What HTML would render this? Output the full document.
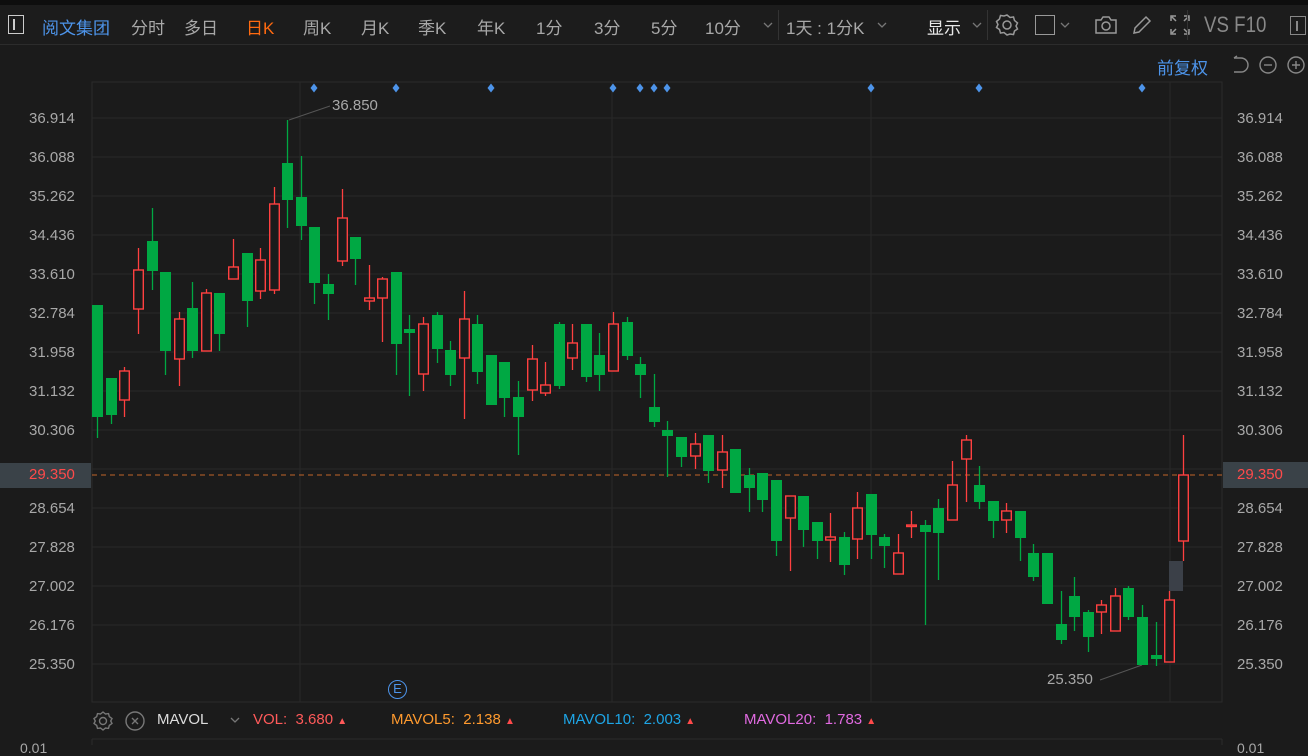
<!DOCTYPE html>
<html><head><meta charset="utf-8"><style>
*{margin:0;padding:0;box-sizing:border-box}
body{width:1308px;height:745px;background:#1b1b1b;overflow:hidden;position:relative;font-family:"Liberation Sans","Noto Sans CJK SC",sans-serif;color:#a8a8a8}
.t{position:absolute;white-space:nowrap}
#top{position:absolute;left:0;top:0;width:1308px;height:5px;background:#0e0e0e}
#bar{position:absolute;left:0;top:5px;width:1308px;height:40px;background:#1c1c1c;border-bottom:1px solid #2c2c2c}
.tb{font-size:17px;top:14px}
.sep{position:absolute;top:10px;width:1px;height:30px;background:#333}
.cv{position:absolute;top:22px}
</style></head><body>
<div id="top"></div><div id="bar"></div>
<div class="t" style="left:8px;top:15px;width:16px;height:19px;border:1.5px solid #ccc"></div>
<div class="t" style="left:13px;top:19px;width:1.5px;height:11px;background:#ccc"></div>
<div class="t tb" style="left:42px;color:#4d94ea">阅文集团</div>
<div class="t tb" style="left:131px">分时</div>
<div class="t tb" style="left:184px">多日</div>
<div class="t tb" style="left:246px;color:#ff6a10">日K</div>
<div class="t tb" style="left:303px">周K</div>
<div class="t tb" style="left:361px">月K</div>
<div class="t tb" style="left:418px">季K</div>
<div class="t tb" style="left:477px">年K</div>
<div class="t tb" style="left:536px">1分</div>
<div class="t tb" style="left:594px">3分</div>
<div class="t tb" style="left:651px">5分</div>
<div class="t tb" style="left:705px">10分</div>
<svg class="cv" style="left:763px" width="10" height="7"><path d="M1 1l4 4 4-4" fill="none" stroke="#777" stroke-width="1.3"/></svg>
<div class="sep" style="left:778px"></div>
<div class="t tb" style="left:786px">1天 : 1分K</div>
<svg class="cv" style="left:877px" width="10" height="7"><path d="M1 1l4 4 4-4" fill="none" stroke="#777" stroke-width="1.3"/></svg>
<div class="t tb" style="left:927px;color:#e8e8e8">显示</div>
<svg class="cv" style="left:972px" width="10" height="7"><path d="M1 1l4 4 4-4" fill="none" stroke="#777" stroke-width="1.3"/></svg>
<div class="sep" style="left:987px"></div>
<svg class="t" style="left:995px;top:13px" width="24" height="24" viewBox="0 0 24 24" fill="none" stroke="#999" stroke-width="1.5"><path d="M12 2l3 2.5 3.5-.5 1 3.5 3 2.5-1.5 3 1.5 3-3 2-1 3.5-3.5-.5L12 22l-3-2.5-3.5.5-1-3.5-3-2 1.5-3-1.5-3 3-2.5 1-3.5 3.5.5z"/><circle cx="12" cy="12" r="4"/></svg>
<div class="t" style="left:1035px;top:15px;width:20px;height:20px;border:1.5px solid #999"></div>
<svg class="cv" style="left:1060px" width="10" height="7"><path d="M1 1l4 4 4-4" fill="none" stroke="#777" stroke-width="1.3"/></svg>
<svg class="t" style="left:1094px;top:14px" width="24" height="22" viewBox="0 0 24 22" fill="none" stroke="#999" stroke-width="1.5"><path d="M2 6h5l2-3h6l2 3h5v13H2z"/><circle cx="12" cy="12" r="4"/></svg>
<svg class="t" style="left:1131px;top:14px" width="22" height="22" viewBox="0 0 22 22" fill="none" stroke="#999" stroke-width="1.5"><path d="M3 19l1-5L15 3l4 4L8 18z"/></svg>
<svg class="t" style="left:1169px;top:14px" width="22" height="22" viewBox="0 0 22 22" fill="none" stroke="#999" stroke-width="1.5"><path d="M2 7V2h5M15 2h5v5M20 15v5h-5M7 20H2v-5M3 3l4 4M19 3l-4 4M19 19l-4-4M3 19l4-4"/></svg>
<div class="sep" style="left:1187px"></div>
<div class="t" style="left:1204px;top:12px;font-size:22px;color:#888;transform:scaleX(0.85);transform-origin:left">VS F10</div>
<div class="t" style="left:1290px;top:16px;width:16px;height:19px;border:1.5px solid #888"></div>
<div class="t" style="left:1296px;top:21px;width:1.5px;height:10px;background:#888"></div>
<div class="t" style="left:1157px;top:54px;font-size:17px;color:#4d94ea">前复权</div>
<svg class="t" style="left:1230px;top:54px" width="78" height="22" viewBox="0 0 78 22" fill="none" stroke="#888" stroke-width="1.4"><path d="M4 4h7a7 7 0 0 1 0 14H4"/><path d="M4 4l3-2"/><circle cx="38" cy="11" r="8"/><path d="M34 11h8"/><circle cx="66" cy="11" r="8"/><path d="M62 11h8M66 7v8"/></svg>
<svg id="ch" class="t" style="left:0;top:0" width="1308" height="745"></svg>
<div class="t" style="left:0;top:463px;width:91px;height:25px;background:#3a4248"></div>
<div class="t" style="left:1223px;top:462px;width:85px;height:26px;background:#3a4248"></div>
<div class="t" style="left:29px;top:466px;color:#ff4a4a;font-size:15px">29.350</div>
<div class="t" style="left:1237px;top:466px;color:#ff4a4a;font-size:15px">29.350</div>
<div class="t" style="left:332px;top:97px;font-size:15px;color:#a8a8a8">36.850</div>
<div class="t" style="left:1047px;top:671px;font-size:15px;color:#a8a8a8">25.350</div>
<div class="t" style="left:388px;top:680px;width:19px;height:19px;border:1.5px solid #4d94ea;border-radius:50%;color:#4d94ea;font-size:13px;text-align:center;line-height:16px">E</div>
<svg class="t" style="left:92px;top:710px" width="22" height="22" viewBox="0 0 22 22" fill="none" stroke="#777" stroke-width="1.4"><path d="M11 2l2.5 2 3-.4.8 3 2.7 2-1.3 2.4 1.3 2.4-2.7 2-.8 3-3-.4L11 20l-2.5-2-3 .4-.8-3L2 13.4l1.3-2.4L2 8.6l2.7-2 .8-3 3 .4z"/><circle cx="11" cy="11" r="3.5"/></svg>
<svg class="t" style="left:124px;top:710px" width="22" height="22" viewBox="0 0 22 22" fill="none" stroke="#777" stroke-width="1.4"><circle cx="11" cy="11" r="9"/><path d="M8 8l6 6M14 8l-6 6"/></svg>
<div class="t" style="left:157px;top:711px;font-size:15px;color:#ddd">MAVOL</div>
<svg class="t" style="left:230px;top:717px" width="10" height="7"><path d="M1 1l4 4 4-4" fill="none" stroke="#777" stroke-width="1.3"/></svg>
<div class="t" style="left:253px;top:711px;font-size:15px;color:#ff5a5a">VOL:&nbsp; 3.680 <span style="font-size:10px">▲</span></div>
<div class="t" style="left:391px;top:711px;font-size:15px;color:#ff9a2e">MAVOL5:&nbsp; 2.138 <span style="font-size:10px;color:#ff4a4a">▲</span></div>
<div class="t" style="left:563px;top:711px;font-size:15px;color:#1ea5e6">MAVOL10:&nbsp; 2.003 <span style="font-size:10px;color:#ff4a4a">▲</span></div>
<div class="t" style="left:744px;top:711px;font-size:15px;color:#e06ae0">MAVOL20:&nbsp; 1.783 <span style="font-size:10px;color:#ff4a4a">▲</span></div>
<div class="t" style="left:20px;top:740px;font-size:14px">0.01</div>
<div class="t" style="left:1237px;top:740px;font-size:14px">0.01</div>
<script>
var s='';
var L=92,R=1222,T=82,B=702;
s+='<rect x="'+L+'" y="'+T+'" width="'+(R-L)+'" height="'+(B-T)+'" fill="none" stroke="#2b2b2b"/>';
s+='<line x1="'+L+'" y1="739" x2="'+R+'" y2="739" stroke="#2b2b2b"/><line x1="'+L+'" y1="739" x2="'+L+'" y2="745" stroke="#2b2b2b"/><line x1="'+R+'" y1="739" x2="'+R+'" y2="745" stroke="#2b2b2b"/>';
var labs=['36.914','36.088','35.262','34.436','33.610','32.784','31.958','31.132','30.306','','28.654','27.828','27.002','26.176','25.350'];
for(var i=0;i<15;i++){var y=118+i*39;s+='<line x1="'+L+'" y1="'+y+'" x2="'+R+'" y2="'+y+'" stroke="#282828"/>';
if(labs[i]){s+='<text x="29" y="'+(y+5)+'" fill="#a8a8a8" font-size="15" font-family="Liberation Sans">'+labs[i]+'</text><text x="1237" y="'+(y+5)+'" fill="#a8a8a8" font-size="15" font-family="Liberation Sans">'+labs[i]+'</text>';}}
[300,612,871,1170].forEach(function(x){s+='<line x1="'+x+'" y1="'+T+'" x2="'+x+'" y2="'+B+'" stroke="#282828"/>'});
s+='<line x1="'+L+'" y1="475" x2="'+R+'" y2="475" stroke="#c0642a" stroke-dasharray="5,4"/>';
[314,396,491,613,640,654,667,871,979,1142].forEach(function(x){s+='<path d="M'+x+' 83.5l3.5 4.5-3.5 4.5-3.5-4.5z" fill="#4d94ea"/>'});
s+='<line x1="289" y1="120" x2="330" y2="106" stroke="#555"/><line x1="1100" y1="680" x2="1142" y2="665" stroke="#555"/>';
var c=[[97,'g',305,417,305,438],[111,'g',378,415,378,424],[124,'r',371,400,367,417],[138,'r',270,309,248,334],[152,'g',241,271,208,290],[165,'g',272,351,272,375],[179,'r',319,359,312,386],[192,'g',308,351,282,358],[206,'r',293,351,289,351],[219,'g',293,334,293,351],[233,'r',267,279,239,279],[247,'g',253,301,253,327],[260,'r',260,291,248,299],[274,'r',204,290,187,294],[287,'g',163,200,120,228],[301,'g',197,226,156,240],[314,'g',227,283,227,304],[328,'g',284,294,274,320],[342,'r',218,261,189,266],[355,'g',237,259,237,285],[369,'r',298,301,265,310],[382,'r',279,298,277,342],[396,'g',272,344,272,375],[409,'g',329,333,315,396],[423,'r',324,374,317,391],[437,'g',315,349,312,363],[450,'g',350,375,341,386],[464,'r',319,358,291,419],[477,'g',324,372,315,384],[491,'g',355,405,355,405],[504,'g',362,398,362,417],[518,'g',397,417,381,455],[532,'r',359,390,345,401],[545,'r',385,393,362,396],[559,'g',324,386,322,389],[572,'r',343,358,324,370],[586,'g',324,377,324,382],[599,'g',355,375,333,391],[613,'r',324,371,312,371],[627,'g',322,356,317,360],[640,'g',364,375,357,398],[654,'g',407,422,374,427],[667,'g',430,436,421,477],[681,'g',437,457,437,467],[695,'r',444,456,433,469],[708,'g',435,471,435,483],[722,'r',452,470,435,488],[735,'g',449,493,449,493],[749,'g',475,488,468,512],[762,'g',473,500,473,512],[776,'g',480,541,480,556],[790,'r',496,518,496,571],[803,'g',496,530,496,547],[817,'g',522,541,522,559],[830,'r',537,540,513,562],[844,'g',537,565,532,575],[857,'r',508,539,492,559],[871,'g',494,535,494,559],[884,'g',537,546,534,568],[898,'r',553,574,534,574],[911,'r',525,525,511,538],[925,'g',525,532,520,625],[938,'g',508,533,499,580],[952,'r',485,520,461,520],[966,'r',440,459,435,502],[979,'g',485,502,466,509],[993,'g',501,521,501,538],[1006,'r',511,520,503,533],[1020,'g',511,538,511,561],[1033,'g',553,577,544,581],[1047,'g',553,604,553,604],[1061,'g',624,640,591,644],[1074,'g',596,617,577,631],[1088,'g',612,637,610,652],[1101,'r',605,612,600,634],[1115,'r',596,631,588,631],[1128,'g',588,617,586,620],[1142,'g',617,665,605,665],[1156,'g',655,659,622,666],[1169,'r',600,662,591,662],[1183,'r',475,541,435,561]];
s+='<rect x="1169" y="561" width="14" height="30" fill="#3b4048"/>';
c.forEach(function(d){var x=d[0],col=d[1]=='g'?'#00a843':'#ff4040';
s+='<line x1="'+(x+.5)+'" y1="'+d[4]+'" x2="'+(x+.5)+'" y2="'+d[5]+'" stroke="'+col+'" stroke-width="1.3"/>';
var h=Math.max(d[3]-d[2],1.5);
if(d[1]=='g')s+='<rect x="'+(x-5)+'" y="'+d[2]+'" width="11" height="'+h+'" fill="'+col+'"/>';
else s+='<rect x="'+(x-4.3)+'" y="'+d[2]+'" width="9.6" height="'+h+'" fill="#1b1b1b" stroke="'+col+'" stroke-width="1.4"/>';});
document.getElementById('ch').innerHTML=s;
</script>
</body></html>
